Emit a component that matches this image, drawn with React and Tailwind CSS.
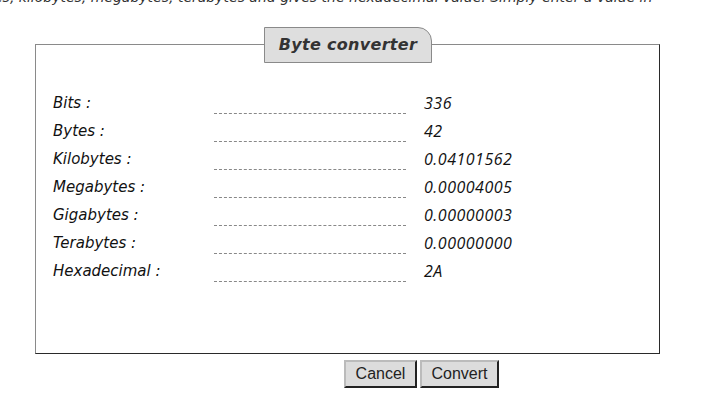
import React from 'react';

const rows = [
  ['Bits :', '336'],
  ['Bytes :', '42'],
  ['Kilobytes :', '0.04101562'],
  ['Megabytes :', '0.00004005'],
  ['Gigabytes :', '0.00000003'],
  ['Terabytes :', '0.00000000'],
  ['Hexadecimal :', '2A'],
];

export default function App() {
  return (
    <div className="w-[704px] h-[404px] bg-white overflow-hidden font-['DejaVu_Sans',sans-serif] text-[#222]">
      {/* cut-off intro line */}
      <div className="h-[6px] overflow-hidden">
        <p className="mt-[-11px] ml-[-6px] whitespace-nowrap italic text-[14px] leading-[17px] text-[#333]">
          es, kilobytes, megabytes, terabytes and gives the hexadecimal value. Simply enter a value in
        </p>
      </div>

      {/* fieldset */}
      <div className="relative ml-[35px] mt-[38px] w-[625px] h-[310px] border border-t-[#8a8a8a] border-l-[#8a8a8a] border-r-[#2a2a2a] border-b-[#2a2a2a] pt-[47px] pl-[17px]">
        <div className="absolute left-[228px] top-[-18px] w-[168px] h-[36px] bg-[#dedede] border border-[#8a8a8a] rounded-tr-[14px] flex items-center justify-center">
          <span className="italic font-bold text-[16px] text-[#333] tracking-[0.3px]">Byte converter</span>
        </div>

        <div className="flex flex-col">
          {rows.map(([label, value]) => (
            <div key={label} className="flex items-start h-[28px]">
              <span className="w-[161px] italic text-[15px] leading-[22px] text-[#111]">{label}</span>
              <div className="w-[192px] h-[22px] border-b border-dashed border-[#888]" />
              <span className="ml-[18px] italic text-[16px] leading-[22px] tracking-[0.5px] text-[#111] font-['Open_Sans',sans-serif]">{value}</span>
            </div>
          ))}
        </div>
      </div>

      {/* buttons */}
      <div className="flex gap-[3px] pl-[344px] mt-[6px] font-['Liberation_Sans',Arial,sans-serif]">
        <button className="w-[73px] h-[28px] bg-[#dcdcdc] border-2 border-t-[#bbb] border-l-[#bbb] border-r-[#222] border-b-[#222] text-[16px] text-[#222]">
          Cancel
        </button>
        <button className="w-[79px] h-[28px] bg-[#dcdcdc] border-2 border-t-[#bbb] border-l-[#bbb] border-r-[#222] border-b-[#222] text-[16px] text-[#222]">
          Convert
        </button>
      </div>
    </div>
  );
}
